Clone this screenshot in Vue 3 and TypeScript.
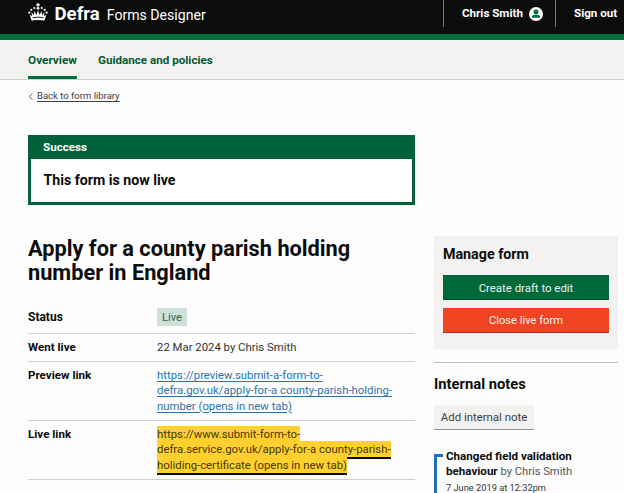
<script setup lang="ts">
interface SummaryRow {
  key: string
  kind: 'tag' | 'text' | 'link' | 'focus'
  lines: string[]
}

const navItems = [
  { label: 'Overview', active: true },
  { label: 'Guidance and policies', active: false },
]

const rows: SummaryRow[] = [
  { key: 'Status', kind: 'tag', lines: ['Live'] },
  { key: 'Went live', kind: 'text', lines: ['22 Mar 2024 by Chris Smith'] },
  {
    key: 'Preview link',
    kind: 'link',
    lines: [
      'https://preview.submit-a-form-to-',
      'defra.gov.uk/apply-for-a county-parish-holding-',
      'number (opens in new tab)',
    ],
  },
  {
    key: 'Live link',
    kind: 'focus',
    lines: [
      'https://www.submit-form-to-',
      'defra.service.gov.uk/apply-for-a county-parish-',
      'holiding-certificate (opens in new tab)',
    ],
  },
]
</script>

<template>
  <div class="page">
    <header class="header">
      <div class="brand">
        <svg class="crown" viewBox="0 0 20 18" width="20" height="18" aria-hidden="true">
          <g fill="#fff">
            <path d="M9.3 0h1.4v1.200H12v1.300h-1.300v1.300H9.300V2.500H8V1.200h1.300z" />
            <circle cx="10" cy="5.300" r="1.400" />
            <circle cx="6.300" cy="5" r="1.100" />
            <circle cx="13.700" cy="5" r="1.100" />
            <circle cx="3.300" cy="6.800" r="1.100" />
            <circle cx="16.700" cy="6.800" r="1.100" />
            <circle cx="1.300" cy="9.600" r="1.100" />
            <circle cx="18.700" cy="9.600" r="1.100" />
            <path d="M3.600 17.500 1.600 11.600l2.300 1.700L3.600 9l2.200 3.300.8-4.300 1.700 4L10 7.600l1.700 4.400 1.700-4 .8 4.300L16.400 9l-.3 4.300 2.300-1.700-2 5.900Q10 16.300 3.600 17.500z" />
          </g>
          <path d="M4.500 14.700Q10 13.600 15.500 14.700" fill="none" stroke="#0b0c0c" stroke-width=".9" />
        </svg>
        <span class="org">Defra</span>
        <span class="service">Forms Designer</span>
      </div>
      <div class="account">
        <a class="account-item user">
          <span>Chris Smith</span>
          <svg viewBox="0 0 14 14" width="14" height="14" aria-hidden="true">
            <circle cx="7" cy="7" r="7" fill="#fff" />
            <circle cx="7" cy="4.900" r="2.500" fill="#00703c" />
            <path d="M2.800 10.800V10c0-1.500 1.500-2.200 4.200-2.200s4.200.7 4.200 2.200v.8z" fill="#00703c" />
          </svg>
        </a>
        <a class="account-item sign-out">Sign out</a>
      </div>
    </header>

    <nav class="nav">
      <a v-for="item in navItems" :key="item.label" class="nav-item" :class="{ active: item.active }">{{ item.label }}</a>
    </nav>

    <a class="back">
      <svg viewBox="0 0 5 7" width="5" height="7" aria-hidden="true">
        <path d="M4.300.6 1 3.500l3.300 2.900" fill="none" stroke="#505a5f" stroke-width=".9" />
      </svg>
      <span>Back to form library</span>
    </a>

    <section class="banner">
      <h2 class="banner-title">Success</h2>
      <p class="banner-body">This form is now live</p>
    </section>

    <div class="columns">
      <main class="main">
        <h1>Apply for a county parish holding<br />number in England</h1>
        <dl class="summary">
          <div v-for="row in rows" :key="row.key" class="row" :class="`row-${row.kind}`">
            <dt>{{ row.key }}</dt>
            <dd>
              <span class="value"><template v-for="(line, i) in row.lines" :key="line"><br v-if="i > 0" />{{ line }}</template></span>
            </dd>
          </div>
        </dl>
      </main>

      <aside class="side">
        <section class="manage">
          <h2>Manage form</h2>
          <button class="btn create">Create draft to edit</button>
          <button class="btn close">Close live form</button>
        </section>
        <section class="notes">
          <h2>Internal notes</h2>
          <button class="add">Add internal note</button>
          <article class="note">
            <p class="note-title"><b>Changed field validation<br />behaviour</b> <span>by Chris Smith</span></p>
            <p class="note-date">7 June 2019 at 12:32pm</p>
          </article>
        </section>
      </aside>
    </div>
  </div>
</template>

<style>
body {
  margin: 0;
  overflow: hidden;
}
</style>

<style scoped>
.page {
  box-sizing: border-box;
  width: 624px;
  height: 493px;
  overflow: hidden;
  background: #fdfdfd;
  color: #0b0c0c;
  font-family: Roboto, "Liberation Sans", sans-serif;
  font-size: 11.35px;
}
h1, h2, p, dl, dd, dt {
  margin: 0;
}
.header {
  box-sizing: border-box;
  height: 40px;
  display: flex;
  justify-content: space-between;
  background: #0b0c0c;
  border-bottom: 6px solid #00703c;
  color: #fff;
}
.brand {
  display: flex;
  align-items: baseline;
  padding-left: 28px;
  line-height: 28px;
}
.crown {
  align-self: flex-start;
  margin-top: 3px;
}
.org {
  margin-left: 6.500px;
  font-size: 18.6px;
  font-weight: 700;
}
.service {
  margin-left: 7px;
  font-size: 14.1px;
}
.account {
  display: flex;
  height: 27px;
  font-weight: 700;
  font-size: 11.6px;
  line-height: 27px;
}
.account-item {
  box-sizing: border-box;
  display: flex;
  align-items: center;
  padding-left: 18px;
  border-left: 1px solid #77797a;
}
.user {
  width: 112px;
  gap: 6px;
}
.sign-out {
  width: 69px;
}
.nav {
  box-sizing: border-box;
  height: 40px;
  display: flex;
  gap: 21px;
  padding-left: 28px;
  background: #f3f2f1;
  border-bottom: 1px solid #ccced0;
}
.nav-item {
  box-sizing: border-box;
  height: 39px;
  color: #005a30;
  font-size: 11.63px;
  font-weight: 700;
  line-height: 40px;
}
.nav-item.active {
  font-size: 11.8px;
  border-bottom: 3px solid #00703c;
}
.back {
  display: flex;
  align-items: center;
  gap: 4px;
  height: 12px;
  padding: 10px 0 0 28px;
  font-size: 9.5px;
  line-height: 12px;
  color: #3b4043;
}
.back span {
  text-decoration: underline;
  text-decoration-thickness: 1px;
  text-underline-offset: 2px;
}
.banner {
  box-sizing: border-box;
  width: 387px;
  height: 70px;
  margin: 33px 0 0 28px;
  border: 3px solid #00623b;
  border-top: 0;
  background: #fff;
}
.banner-title {
  height: 24px;
  padding-left: 12px;
  background: #00623b;
  color: #fff;
  font-size: 11.6px;
  line-height: 25px;
}
.banner-body {
  padding-left: 12.500px;
  font-size: 14.17px;
  font-weight: 700;
  line-height: 43px;
}
.columns {
  display: flex;
  gap: 19px;
  padding: 31px 0 0 28px;
}
.main {
  width: 387px;
}
h1 {
  padding-top: 1px;
  font-size: 21.75px;
  font-weight: 700;
  line-height: 24px;
}
.summary {
  margin-top: 16px;
}
.row {
  box-sizing: border-box;
  display: flex;
  border-bottom: 1px solid #cfd1d3;
  padding-top: 6px;
  line-height: 15.300px;
}
dt {
  width: 129px;
  font-size: 11.6px;
  font-weight: 700;
}
.row-tag {
  height: 33px;
  padding-top: 9px;
  align-items: flex-start;
}
.row-tag dt {
  font-size: 12px;
}
.row-tag dd {
  margin-top: -2px;
}
.row-tag .value {
  display: block;
  height: 18px;
  padding: 0 5px;
  background: #cce2d8;
  color: #2f6350;
  font-size: 11.2px;
  line-height: 19px;
}
.row-text {
  height: 28px;
}
.row-text .value {
  color: #303436;
}
.row-link {
  height: 59px;
}
.row-link .value {
  color: #2c74ad;
  text-decoration: underline;
  text-decoration-thickness: 1px;
  text-underline-offset: 2px;
}
.row-focus {
  height: 59px;
}
.row-focus .value {
  padding: 1px 0;
  background: #ffd02e;
  color: #453808;
  box-shadow: 0 2px #0b0c0c;
}
.side {
  width: 184px;
}
.manage {
  box-sizing: border-box;
  height: 113px;
  padding: 10px 9px 0;
  background: #f3f2f1;
}
h2 {
  font-weight: 700;
}
.manage h2 {
  font-size: 14.28px;
  line-height: 17px;
}
button {
  display: block;
  padding: 0;
  border: 0;
  font-family: inherit;
  font-size: 11.4px;
}
.btn {
  width: 166px;
  height: 25px;
  color: #eef6f1;
}
.create {
  margin-top: 12px;
  background: #00693c;
  box-shadow: inset 0 -1px #00502d;
}
.close {
  margin-top: 8px;
  background: #f04423;
  box-shadow: inset 0 -1px #a5301d;
  font-size: 11.15px;
}
.notes {
  margin-top: 13px;
  padding-top: 12px;
  border-top: 1px solid #b9bbbd;
}
.notes h2 {
  font-size: 14.78px;
  line-height: 18px;
}
.add {
  width: 100px;
  height: 25px;
  margin-top: 12px;
  background: #f3f2f1;
  border-bottom: 1px solid #8f9395;
  color: #3b4043;
}
.note {
  position: relative;
  height: 60px;
  margin-top: 24px;
  padding-left: 9px;
  border-left: 3px solid #1d70b8;
}
.note::before {
  content: "";
  position: absolute;
  left: 0;
  top: 0;
  width: 6px;
  height: 3px;
  background: #1d70b8;
}
.note-title {
  position: relative;
  top: -5px;
  font-size: 11.2px;
  line-height: 15.300px;
  color: #50575b;
}
.note-title b {
  color: #0b0c0c;
  font-size: 11.6px;
}
.note-date {
  position: relative;
  top: -4px;
  font-size: 9.27px;
  line-height: 14px;
  color: #303436;
}
</style>
